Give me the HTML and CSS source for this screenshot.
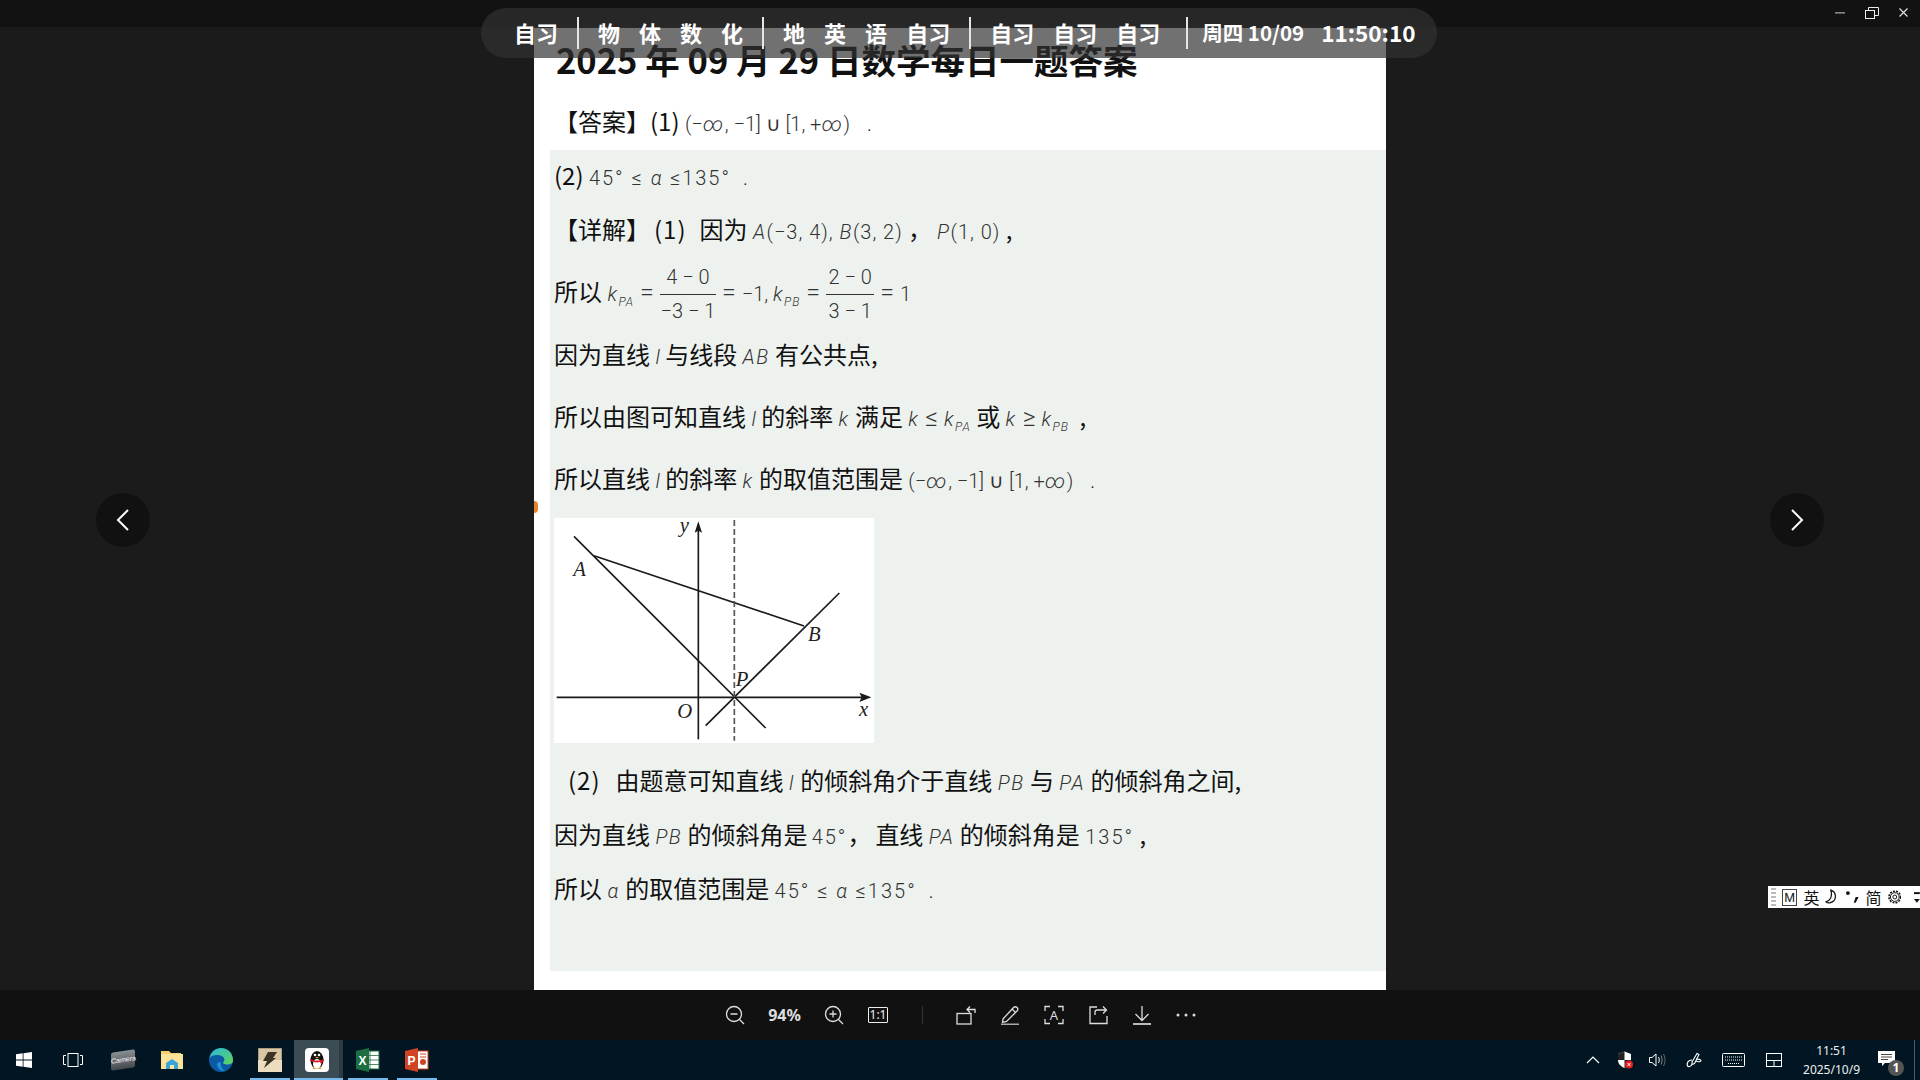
FILE: index.html
```html
<!DOCTYPE html>
<html>
  <head>
    <meta charset="utf-8" />
    <title>图片查看器</title>
    <link rel="stylesheet" href="styles.css">
  </head>
  <body>
    <div class="titleBar">
      <svg class="winIcon" width="10" height="2" viewBox="0 0 10 2"><rect width="10" height="1.6" fill="#888"/></svg>
      <svg class="winIcon" width="14" height="12" viewBox="0 0 14 12" fill="none" stroke="#eee"><rect x="0.5" y="3.5" width="9" height="8"/><path d="M3.5 3.5V0.5H13.5V8.5H9.5"/></svg>
      <svg class="winIcon" width="9" height="9" viewBox="0 0 9 9" fill="none" stroke="#ddd" stroke-width="1.2"><path d="M0.5 0.5L8.5 8.5M8.5 0.5L0.5 8.5"/></svg>
    </div>

    <div class="viewer">
      <div class="page">
        <span class="pageDot"></span>
        <h1 class="pageTitle">2025 年 09 月 29 日数学每日一题答案</h1>
        <p class="answerLine">【答案】(1) <span class="math">(−<i>∞</i>, −1] ∪ [1, +<i>∞</i>)</span><span class="math dotGap">.</span></p>
        <div class="panel">
          <p class="line">(2) <span class="math wideMath">45° ≤ <i>α</i> ≤135°</span><span class="math dotNear">.</span></p>
          <p class="line">【详解】<span class="partNo">(1)</span>因为 <span class="math midMath"><i>A</i>(−3, 4), <i>B</i>(3, 2)</span> ，<span class="math midMath pointNudge"><i>P</i>(1, 0)</span> ,</p>
          <p class="line fractionLine">所以 <span class="math"><i>k<sub>PA</sub></i><span class="eq">=</span></span><span class="fraction"><span>4 − 0</span><span class="denominator">−3 − 1</span></span><span class="math"><span class="eq">=</span>−1, <i>k<sub>PB</sub></i><span class="eq">=</span></span><span class="fraction smallFraction"><span>2 − 0</span><span class="denominator">3 − 1</span></span><span class="math"><span class="eq">=</span>1</span></p>
          <p class="line">因为直线 <span class="math"><i class="ell">l</i></span> 与线段 <span class="math"><i>AB</i></span> 有公共点,</p>
          <p class="line looseLine">所以由图可知直线 <span class="math"><i class="ell">l</i></span> 的斜率 <span class="math"><i>k</i></span> 满足 <span class="math"><i>k</i><span class="eq">≤</span><i>k<sub>PA</sub></i></span> 或 <span class="math"><i>k</i><span class="eq">≥</span><i>k<sub>PB</sub></i></span>  ,</p>
          <p class="line looseLine">所以直线 <span class="math"><i class="ell">l</i></span> 的斜率 <span class="math"><i>k</i></span> 的取值范围是 <span class="math">(−<i>∞</i>, −1] ∪ [1, +<i>∞</i>)</span><span class="math dotGap">.</span></p>

          <svg class="diagram" width="320" height="225" viewBox="0 0 958 675">
            <g fill="none" stroke="#1a1a1a" stroke-width="5">
              <path d="M432 664V20"/>
              <path d="M7 538H940"/>
              <path d="M59 55L634 630"/>
              <path d="M119 113L749 324"/>
              <path d="M454 623L855 225"/>
              <path d="M540 6V668" stroke="#555" stroke-dasharray="18 9"/>
            </g>
            <path d="M432 10L421 44L432 38L443 44Z" fill="#1a1a1a"/>
            <path d="M951 538L915 524L922 538L915 552Z" fill="#1a1a1a"/>
            <g class="diagramLabel">
              <text x="376" y="43">y</text>
              <text x="57" y="173">A</text>
              <text x="761" y="370">B</text>
              <text x="544" y="505">P</text>
              <text x="369" y="600">O</text>
              <text x="914" y="595">x</text>
            </g>
          </svg>

          <p class="line afterDiagram"><span class="partNo leadNo">(2)</span>由题意可知直线 <span class="math ellGap"><i class="ell">l</i></span>的倾斜角介于直线 <span class="math"><i>PB</i></span> 与 <span class="math"><i>PA</i></span> 的倾斜角之间,</p>
          <p class="line">因为直线 <span class="math"><i>PB</i></span> 的倾斜角是<span class="math wideMath degreeGap">45°</span>，<span class="afterComma">直线</span> <span class="math"><i>PA</i></span> 的倾斜角是 <span class="math wideMath">135°</span> ,</p>
          <p class="line">所以 <span class="math"><i>α</i></span> 的取值范围是 <span class="math wideMath">45° ≤ <i>α</i> ≤135°</span><span class="math dotNear">.</span></p>
        </div>
      </div>

      <div class="navButton prevButton">
        <svg width="14" height="22" viewBox="0 0 14 22" fill="none" stroke="#fff" stroke-width="2"><path d="M12 1L2 11L12 21"/></svg>
      </div>
      <div class="navButton nextButton">
        <svg width="14" height="22" viewBox="0 0 14 22" fill="none" stroke="#fff" stroke-width="2"><path d="M2 1L12 11L2 21"/></svg>
      </div>

      <div class="imeBar">
        <span class="imeHandle"></span>
        <span class="imeMode">M</span>
        <span class="imeChar">英</span>
        <svg width="14" height="16" viewBox="0 0 14 16" fill="none" stroke="#111" stroke-width="1.3"><path d="M6 1C12 3 13 12 5 14C3 14.500 2 14 1 13C5 12 8 8 6 1Z"/></svg>
        <svg width="15" height="16" viewBox="0 0 15 16" fill="#111"><circle cx="3" cy="4" r="2"/><path d="M11 8L14 8L11 14L9 14Z"/></svg>
        <span class="imeChar">简</span>
        <svg width="14" height="14" viewBox="0 0 14 14" fill="none" stroke="#111"><circle cx="7" cy="7" r="2"/><circle cx="7" cy="7" r="4.500"/><circle cx="7" cy="7" r="6" stroke-dasharray="2 1.200" stroke-width="1.600"/></svg>
        <svg class="imeMenu" width="6" height="14" viewBox="0 0 6 14" fill="#111"><rect y="2" width="6" height="2"/><path d="M0 9H6L3 13Z"/></svg>
      </div>
    </div>

    <div class="timetable">
      <span class="lesson">自习</span>
      <span class="divider"></span>
      <span class="lesson">物</span><span class="lesson">体</span><span class="lesson">数</span><span class="lesson">化</span>
      <span class="divider"></span>
      <span class="lesson">地</span><span class="lesson">英</span><span class="lesson">语</span><span class="lesson">自习</span>
      <span class="divider"></span>
      <span class="lesson">自习</span><span class="lesson">自习</span><span class="lesson">自习</span>
      <span class="divider lastDivider"></span>
      <span class="dateText">周四 10/09</span>
      <span class="timeText">11:50:10</span>
    </div>

    <div class="toolbar">
      <div class="tool"><svg width="20" height="20" viewBox="0 0 20 20" fill="none" stroke="#ddd" stroke-width="1.300"><circle cx="9" cy="9" r="7.500"/><path d="M14.500 14.500L19 19M5.500 9H12.500"/></svg></div>
      <div class="zoomValue">94%</div>
      <div class="tool"><svg width="20" height="20" viewBox="0 0 20 20" fill="none" stroke="#ddd" stroke-width="1.300"><circle cx="9" cy="9" r="7.500"/><path d="M14.500 14.500L19 19M5.500 9H12.500M9 5.500V12.500"/></svg></div>
      <div class="tool"><span class="oneToOne">1:1</span></div>
      <div class="toolDivider"></div>
      <div class="tool"><svg width="20" height="20" viewBox="0 0 20 20" fill="none" stroke="#ddd" stroke-width="1.300"><rect x="1" y="8.500" width="14" height="10.500"/><path d="M19 8V4.500H11M14 1.500L11 4.500L14 7.500"/></svg></div>
      <div class="tool"><svg width="20" height="20" viewBox="0 0 20 20" fill="none" stroke="#ddd" stroke-width="1.300"><path d="M3 14L13.500 2.500C14.500 1.500 16 1.500 17 2.500C18 3.500 18 5 17 6L6.500 16.500L2.500 17.500Z"/><path d="M12 4L15.500 7.500"/><path d="M1 19.500H19" stroke="#aaa" stroke-width="2"/></svg></div>
      <div class="tool"><div class="scanIcon"><svg width="20" height="20" viewBox="0 0 20 20" fill="none" stroke="#ddd" stroke-width="1.300"><path d="M1 6V1.500H6M14 1.500H19V6M1 14V18.500H6M14 18.500H19V14"/></svg><span class="scanLetter">A</span></div></div>
      <div class="tool"><svg width="20" height="20" viewBox="0 0 20 20" fill="none" stroke="#ddd" stroke-width="1.300"><path d="M9 2H2V18.500H19V11"/><path d="M7 10V7C7 5.500 8 5 9.500 5H18M15 1.500L18.500 5L15 8.500"/></svg></div>
      <div class="tool"><svg width="20" height="20" viewBox="0 0 20 20" fill="none" stroke="#ddd" stroke-width="1.300"><path d="M10 1V15M3.500 9L10 15.500L16.500 9"/><path d="M1 19H19" stroke="#bbb" stroke-width="2"/></svg></div>
      <div class="tool"><svg width="20" height="4" viewBox="0 0 20 4" fill="#ddd"><circle cx="2" cy="2" r="1.500"/><circle cx="10" cy="2" r="1.500"/><circle cx="18" cy="2" r="1.500"/></svg></div>
    </div>

    <div class="taskbar">
      <div class="taskButton startButton"><svg width="16" height="16" viewBox="0 0 16 16" fill="#fff"><path d="M0 2.300L6.700 1.300V7.600H0ZM7.500 1.200L16 0V7.600H7.500ZM0 8.400H6.700V14.700L0 13.700ZM7.500 8.400H16V16L7.500 14.800Z"/></svg></div>
      <div class="taskButton viewButton"><svg width="20" height="14" viewBox="0 0 20 14" fill="none" stroke="#fff" stroke-width="1"><rect x="5" y="0.500" width="10" height="13"/><path d="M3 2.500H0.500V11.500H3M17 2.500H19.500V11.500H17"/></svg></div>
      <div class="taskButton"><div class="cameraIcon">Camera</div></div>
      <div class="taskButton"><svg width="22" height="20" viewBox="0 0 22 20"><path d="M0 1H8L10 3H20V19H0Z" fill="#f3cf6e"/><rect y="4" width="22" height="15" fill="#fbe39a"/><path d="M5 19V13L11 9L17 13V19H13V15H9V19Z" fill="#3aa5dc"/></svg></div>
      <div class="taskButton"><svg width="24" height="24" viewBox="0 0 24 24"><defs><linearGradient id="edgeTop" x1="0" y1="0" x2="1" y2="1"><stop offset="0" stop-color="#2bb8d8"/><stop offset="1" stop-color="#5fd35a"/></linearGradient></defs><circle cx="12" cy="12" r="12" fill="#0c59a4"/><path d="M0.500 10C2 3.500 7 0 12 0C19 0 24 5 24 12.500C24 15.500 21 16.500 18 16.500C15.500 16.500 14 15.500 14 14.500C16 13 16 10 13.500 8.500C9 6 3 7 0.500 10Z" fill="url(#edgeTop)"/><path d="M8 16C8 20 12 23.500 16 23C13 21.500 11.500 18 12 14.500C10 14 8.500 14.500 8 16Z" fill="#1e90d6"/></svg></div>
      <div class="taskButton running"><svg width="24" height="24" viewBox="0 0 24 24"><rect width="24" height="24" fill="#d8c6a4" stroke="#7c735f"/><path d="M0 12H24V24H0Z" fill="#ecdcc0"/><path d="M10 4H19L15 10H18L6 20L9 13H5Z" fill="#3a3225"/></svg></div>
      <div class="taskButton activeTask"><svg width="24" height="24" viewBox="0 0 24 24"><rect width="24" height="24" rx="4" fill="#fff"/><ellipse cx="12" cy="12" rx="6.500" ry="9" fill="#111"/><ellipse cx="12" cy="16" rx="4" ry="5" fill="#fff"/><circle cx="10" cy="7" r="1.300" fill="#fff"/><circle cx="14" cy="7" r="1.300" fill="#fff"/><path d="M10 9H14L12 10.500Z" fill="#f5a623"/><path d="M5 11C9 13 15 13 19 11L19 13L17 14V17L15 14C11 15 8 14 5 13Z" fill="#d91f26"/><path d="M7 21H11L9 19ZM13 21H17L15 19Z" fill="#f5a623"/></svg></div>
      <div class="taskButton running"><svg width="24" height="24" viewBox="0 0 24 24"><rect x="9" y="3" width="14" height="18" fill="#fff" stroke="#1d6f42"/><path d="M14 3V21M9 7.500H23M9 12H23M9 16.500H23" stroke="#1d6f42" stroke-width="0.800"/><path d="M0 3L13 0V24L0 21Z" fill="#1d6f42"/><text class="officeLetter" x="2.500" y="16.500">X</text></svg></div>
      <div class="taskButton running"><svg width="24" height="24" viewBox="0 0 24 24"><rect x="9" y="3" width="14" height="18" fill="#fff" stroke="#d04423"/><path d="M15 6H21M15 9H21" stroke="#d04423"/><circle cx="18" cy="14" r="3" fill="#d04423"/><path d="M0 3L13 0V24L0 21Z" fill="#d04423"/><text class="officeLetter" x="2.500" y="16.500">P</text></svg></div>

      <div class="tray">
        <svg class="trayChevron" width="14" height="8" viewBox="0 0 14 8" fill="none" stroke="#fff" stroke-width="1.200"><path d="M1 7L7 1L13 7"/></svg>
        <svg class="trayShield" width="16" height="18" viewBox="0 0 16 18"><path d="M7.500 0.500L14 3V9C14 13 11 15.500 7.500 17C4 15.500 1 13 1 9V3Z" fill="#fff"/><path d="M7.500 0.500V9H1V3ZM7.500 9H14C14 13 11 15.500 7.500 17Z" fill="#222"/><circle cx="12" cy="13.500" r="4" fill="#e02020"/><path d="M10.500 12L13.500 15M13.500 12L10.500 15" stroke="#fff"/></svg>
        <svg class="traySpeaker" width="17" height="14" viewBox="0 0 17 14" fill="none" stroke="#fff"><path d="M0.500 4.500H3L7 1V13L3 9.500H0.500Z"/><path d="M9.500 4C10.500 6 10.500 8 9.500 10"/><path d="M12 2.500C13.500 5.500 13.500 8.500 12 11.500" stroke="#888"/><path d="M14.500 1C16.500 5 16.500 9 14.500 13" stroke="#666"/></svg>
        <svg class="trayPen" width="16" height="16" viewBox="0 0 16 16" fill="none" stroke="#fff" stroke-width="1.100"><path d="M6 10L11 1.500L13 2.500L8.500 11.500L6 12.500Z"/><path d="M6 8C2 8 0.500 11 1.500 14C3 15.500 5 14 6 12.500M10 7C12 7 15 7.500 15 8.500C15 10 12 10 10 9"/></svg>
        <svg class="trayKeyboard" width="23" height="14" viewBox="0 0 23 14" fill="none" stroke="#fff"><rect x="0.500" y="0.500" width="22" height="13" rx="1"/><path d="M3 4H20M3 7H20M6 10.500H17" stroke-dasharray="1 1"/></svg>
        <svg class="trayPad" width="16" height="14" viewBox="0 0 16 14" fill="none" stroke="#fff"><rect x="0.500" y="0.500" width="15" height="13"/><path d="M0.500 7.500H15.500M8 7.500V13.500"/></svg>
        <div class="clock"><span>11:51</span><span>2025/10/9</span></div>
        <div class="notifyIcon">
          <svg width="17" height="16" viewBox="0 0 17 16"><path d="M0 0H17V12H7L4 15V12H0Z" fill="#fff"/><path d="M3 3.500H14M3 6H14M3 8.500H10" stroke="#444"/></svg>
          <span class="notifyBadge">1</span>
        </div>
        <span class="showDesktop"></span>
      </div>
    </div>
  </body>
</html>
```

FILE: styles.css
```css
html,
body {
  margin: 0;
  height: 1080px;
  overflow: hidden;
}
body {
  display: flex;
  flex-direction: column;
  position: relative;
  background: #1b1b1b;
  font-family: "Noto Sans CJK SC", "Noto Sans", sans-serif;
}
p,
h1 {
  margin: 0;
}

/* window title bar */
.titleBar {
  height: 27px;
  flex: none;
  background: #121212;
  display: flex;
  align-items: center;
  justify-content: flex-end;
  gap: 20px;
  padding-right: 12px;
  padding-bottom: 2px;
  box-sizing: border-box;
}

/* image area */
.viewer {
  flex: 1;
  position: relative;
  display: flex;
  justify-content: center;
  padding-top: 1px;
  min-height: 0;
}
.page {
  width: 852px;
  height: 962px;
  background: white;
  position: relative;
  display: flex;
  flex-direction: column;
}
.pageDot {
  position: absolute;
  left: 0;
  top: 473px;
  width: 4px;
  height: 12px;
  background: #e8812c;
  border-radius: 0 6px 6px 0;
}
.pageTitle {
  font-size: 34.5px;
  font-weight: 700;
  line-height: 50px;
  height: 50px;
  margin-top: 6px;
  padding-left: 22px;
  color: #111;
  white-space: pre;
}
.answerLine {
  font-size: 24px;
  line-height: 54px;
  height: 56px;
  padding: 10px 0 0 20px;
  color: #111;
}
.panel {
  margin-left: 16px;
  height: 821px;
  background: #eef2ef;
  padding-left: 4px;
}
.line {
  font-size: 24px;
  line-height: 49px;
  height: 54px;
  color: #111;
  white-space: pre;
}
.fractionLine {
  height: 72px;
  line-height: 67px;
  margin-top: -1px;
}
.looseLine {
  margin-top: 8px;
}
.afterDiagram {
  margin-top: 12px;
}
.partNo {
  letter-spacing: 1px;
  margin: 0 13px 0 4px;
}
.leadNo {
  margin-left: 14px;
  margin-right: 15px;
}
.afterComma {
  margin-left: 4px;
}
.math {
  font-family: Roboto, "DejaVu Sans", sans-serif;
  font-weight: 300;
  font-size: 20px;
  color: #333;
}
.wideMath {
  letter-spacing: 2px;
}
.midMath {
  letter-spacing: 1px;
}
.pointNudge {
  margin-left: 5px;
}
.degreeGap {
  margin-left: 4px;
}
.ellGap {
  margin-right: 7px;
}
.math i {
  font-style: italic;
  letter-spacing: 1.5px;
}
.math i.ell {
  letter-spacing: 0;
}
.math sub {
  font-size: 12px;
  letter-spacing: 1px;
  vertical-align: -5px;
  line-height: 0;
}
.eq {
  font-size: 25px;
  line-height: 0;
  margin: 0 6px;
}
.dotGap {
  margin-left: 17px;
  color: #111;
}
.dotNear {
  margin-left: 12px;
  color: #111;
}
.fraction {
  display: inline-flex;
  flex-direction: column;
  align-items: center;
  vertical-align: middle;
  width: 56px;
  font-family: Roboto, sans-serif;
  font-weight: 300;
  font-size: 20px;
  line-height: 33px;
  color: #333;
}
.smallFraction {
  width: 48px;
}
.denominator {
  width: 100%;
  text-align: center;
  border-top: 1px solid #333;
}
.diagram {
  display: block;
  margin-top: 11px;
  background: white;
}
.diagramLabel {
  font-family: "Liberation Serif", serif;
  font-style: italic;
  font-size: 62px;
  fill: #222;
}

/* previous and next */
.navButton {
  position: absolute;
  top: 466px;
  width: 54px;
  height: 54px;
  border-radius: 50%;
  background: #111;
  display: flex;
  align-items: center;
  justify-content: center;
}
.prevButton {
  left: 96px;
}
.nextButton {
  left: 1770px;
}

/* input method bar */
.imeBar {
  position: absolute;
  left: 1768px;
  top: 859px;
  width: 152px;
  height: 22px;
  background: white;
  display: flex;
  align-items: center;
  gap: 6px;
  box-sizing: border-box;
  padding-left: 3px;
}
.imeHandle {
  width: 5px;
  height: 18px;
  background: repeating-linear-gradient(#bbb 0 2px, white 2px 4px);
}
.imeMode {
  width: 14px;
  height: 15px;
  border: 1px solid #444;
  font-family: "Liberation Sans", sans-serif;
  font-size: 13px;
  line-height: 15px;
  text-align: center;
  color: #111;
}
.imeChar {
  font-size: 16px;
  line-height: 20px;
  color: #111;
}
.imeMenu {
  margin-left: 7px;
}

/* timetable floating over the page */
.timetable {
  position: absolute;
  left: 481px;
  top: 8px;
  width: 956px;
  height: 50px;
  box-sizing: border-box;
  padding-left: 33px;
  border-radius: 25px;
  background: rgba(49, 49, 49, 0.69);
  display: flex;
  align-items: center;
  gap: 19px;
  color: white;
  font-weight: 700;
  white-space: pre;
}
.lesson {
  font-size: 22px;
  margin-top: -2px;
}
.divider {
  width: 2px;
  height: 32px;
  background: #e6e6e6;
}
.lastDivider {
  margin-left: 7px;
}
.dateText {
  font-size: 20.5px;
  margin: -2px 0 0 -5px;
}
.timeText {
  font-size: 22.5px;
  margin: -2px 0 0 -2px;
}

/* viewer tools */
.toolbar {
  height: 50px;
  flex: none;
  background: #111;
  display: flex;
  align-items: center;
  justify-content: center;
  padding-left: 1px;
}
.tool {
  width: 44px;
  height: 50px;
  display: flex;
  align-items: center;
  justify-content: center;
}
.zoomValue {
  width: 55px;
  text-align: center;
  color: #ddd;
  font-family: "Noto Sans", sans-serif;
  font-size: 16px;
  font-weight: 700;
}
.oneToOne {
  width: 20px;
  height: 16px;
  box-sizing: border-box;
  border: 1px solid #eee;
  border-radius: 1px;
  color: #eee;
  font-family: "Noto Sans", sans-serif;
  font-size: 12px;
  line-height: 14px;
  text-align: center;
}
.toolDivider {
  width: 44px;
  height: 18px;
  background: linear-gradient(#333, #333) center / 1px 100% no-repeat;
}
.scanIcon {
  width: 20px;
  height: 20px;
  position: relative;
}
.scanLetter {
  position: absolute;
  left: 0;
  right: 0;
  top: 0;
  text-align: center;
  color: #ddd;
  font-family: "Noto Sans", sans-serif;
  font-size: 13px;
  line-height: 20px;
}

/* windows taskbar */
.taskbar {
  height: 40px;
  flex: none;
  background: #011622;
  display: flex;
}
.taskButton {
  width: 49px;
  height: 40px;
  display: flex;
  align-items: center;
  justify-content: center;
  position: relative;
}
.startButton {
  width: 48px;
}
.viewButton {
  width: 50px;
}
.running::after {
  content: "";
  position: absolute;
  left: 5px;
  right: 4px;
  bottom: 0;
  height: 2px;
  background: #76b9ed;
}
.activeTask {
  background: #3c4c55;
  border-right: 4px solid #2c3a42;
  box-sizing: border-box;
}
.activeTask::after {
  content: "";
  position: absolute;
  left: 0;
  right: -4px;
  bottom: 0;
  height: 2px;
  background: #76b9ed;
}
.cameraIcon {
  width: 24px;
  height: 18px;
  border-radius: 2px;
  background: linear-gradient(#8a8f93, #45494d);
  color: white;
  font-family: "Liberation Sans", sans-serif;
  font-size: 7px;
  line-height: 18px;
  text-align: center;
  transform: skewY(-8deg);
}
.officeLetter {
  font-family: "Liberation Sans", sans-serif;
  font-size: 12px;
  font-weight: 700;
  fill: white;
}
.tray {
  margin-left: auto;
  display: flex;
  align-items: center;
  gap: 20px;
  color: white;
}
.trayShield {
  margin-left: -3px;
}
.traySpeaker {
  margin-left: -4px;
}
.trayPad {
  margin-left: 1px;
}
.clock {
  display: flex;
  flex-direction: column;
  align-items: center;
  margin-left: 1px;
  color: #eee;
  font-family: "Noto Sans", sans-serif;
  font-size: 12px;
  line-height: 19px;
}
.notifyIcon {
  width: 26px;
  height: 24px;
  margin-left: -2px;
  position: relative;
}
.notifyBadge {
  position: absolute;
  right: 0;
  bottom: -4px;
  width: 16px;
  height: 16px;
  border-radius: 50%;
  background: #555;
  color: white;
  font-family: "Noto Sans", sans-serif;
  font-size: 12px;
  font-weight: 700;
  line-height: 16px;
  text-align: center;
}
.showDesktop {
  width: 5px;
  height: 40px;
  margin-left: -10px;
  border-left: 1px solid #556;
}
```
